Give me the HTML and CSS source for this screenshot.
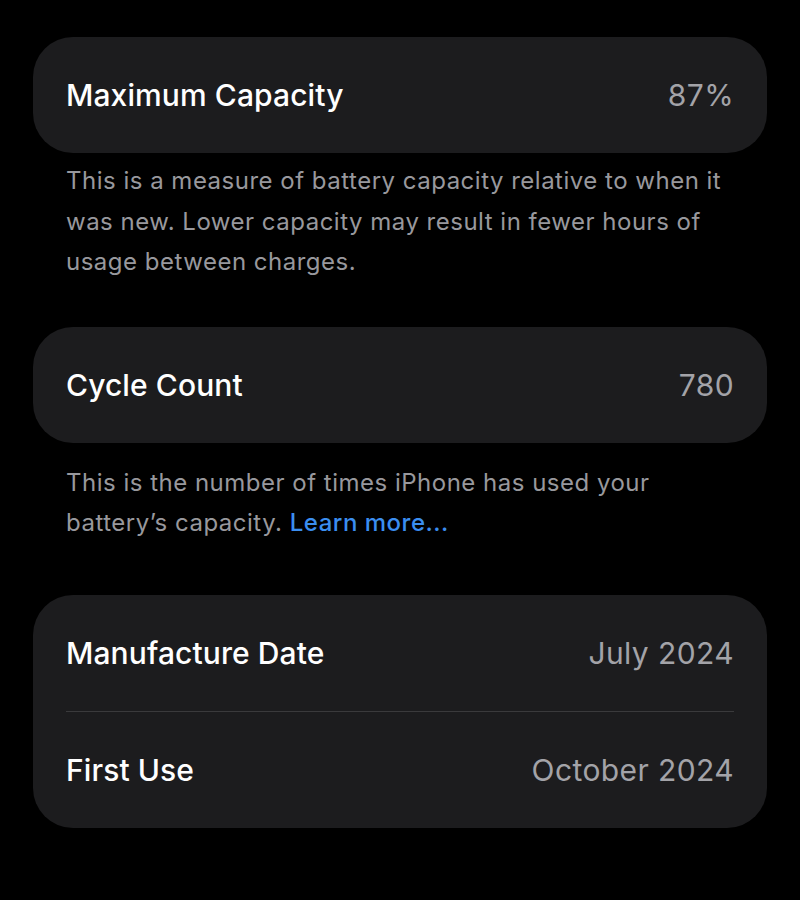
FILE: index.html
```html
<!DOCTYPE html>
<html lang="en">
<head>
    <meta charset="UTF-8">
    <meta name="viewport" content="width=device-width, initial-scale=1.0">
    <title>Battery Health</title>
    <link rel="stylesheet" href="styles.css">
</head>
<body>
    <div class="page">
        <div class="card">
            <div class="row"><span class="label">Maximum Capacity</span><span class="value">87%</span></div>
        </div>
        <p class="note first">This is a measure of battery capacity relative to when it was new. Lower capacity may result in fewer hours of usage between charges.</p>

        <div class="card">
            <div class="row"><span class="label">Cycle Count</span><span class="value">780</span></div>
        </div>
        <p class="note second">This is the number of times iPhone has used your battery’s capacity. <a href="#">Learn more...</a></p>

        <div class="card">
            <div class="row"><span class="label">Manufacture Date</span><span class="value">July 2024</span></div>
            <div class="sep"></div>
            <div class="row"><span class="label">First Use</span><span class="value">October 2024</span></div>
        </div>
    </div>
</body>
</html>
```

FILE: styles.css
```css
*{margin:0;padding:0;box-sizing:border-box;font-family:Inter, "Liberation Sans", sans-serif;}

body{background:#000;color:#fff;}

.page{padding:37px 33px 0 33px;}

.card{background:#1c1c1e;border-radius:40px;padding:0 33px;}

.row{display:flex;justify-content:space-between;align-items:center;height:116px;}

.label{font-size:30px;font-weight:500;color:#fff;letter-spacing:0.1px;}

.value{font-size:30px;font-weight:400;color:#a3a3a8;letter-spacing:0.4px;}

.sep{height:1px;background:#3a3a3c;}

.note{color:#98989d;font-size:24px;line-height:40.5px;padding:0 33px;letter-spacing:0.5px;}
.note.first{margin:8px 0 44px;}
.note.second{margin:20px 0 51px;}
.note a{color:#3b8ef0;text-decoration:none;font-weight:500;}
```
